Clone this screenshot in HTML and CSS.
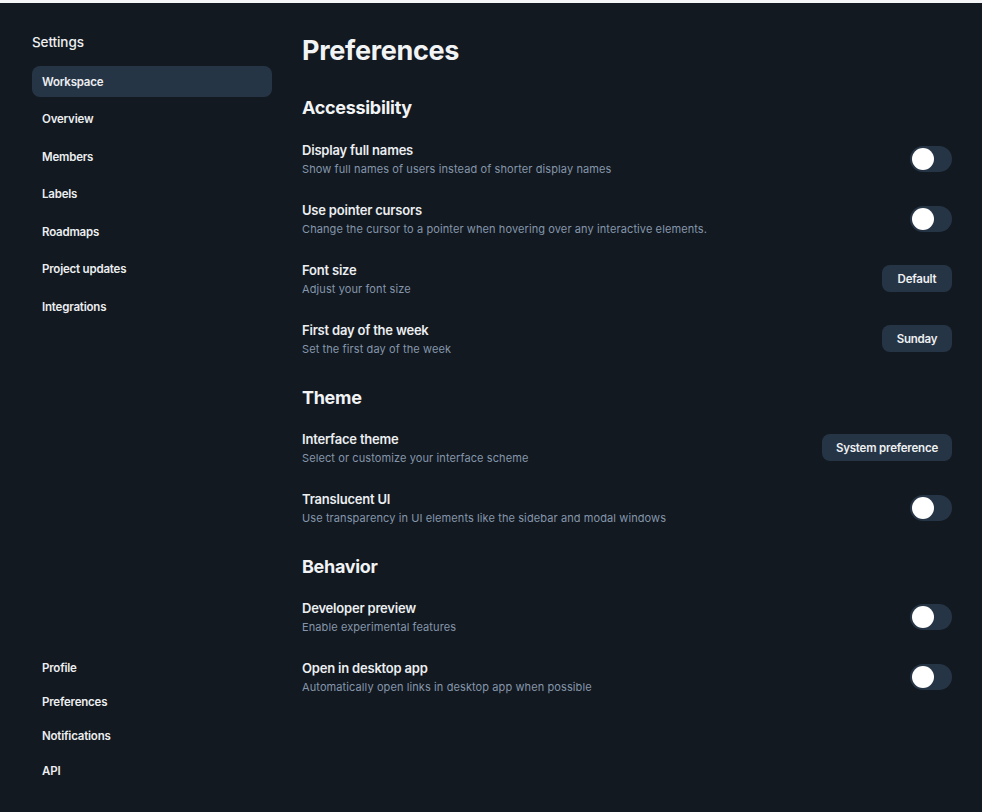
FILE: index.html
```html
<!DOCTYPE html>
<html lang="en">
<head>
<meta charset="utf-8">
<title>Preferences</title>
<link rel="stylesheet" href="styles.css">
</head>
<body>
<div class="app">
  <aside class="sidebar">
    <div class="sidebar-title">Settings</div>
    <nav class="nav">
      <a class="nav-item active">Workspace</a>
      <a class="nav-item">Overview</a>
      <a class="nav-item">Members</a>
      <a class="nav-item">Labels</a>
      <a class="nav-item">Roadmaps</a>
      <a class="nav-item">Project updates</a>
      <a class="nav-item">Integrations</a>
    </nav>
    <nav class="nav nav-bottom">
      <a class="nav-item small">Profile</a>
      <a class="nav-item small">Preferences</a>
      <a class="nav-item small">Notifications</a>
      <a class="nav-item small">API</a>
    </nav>
  </aside>
  <main class="main">
    <h1 class="page-title">Preferences</h1>

    <section class="section">
      <h2 class="section-title">Accessibility</h2>
      <div class="rows">
        <div class="row">
          <div class="row-text">
            <div class="row-title">Display full names</div>
            <div class="row-desc">Show full names of users instead of shorter display names</div>
          </div>
          <span class="toggle"><span class="knob"></span></span>
        </div>
        <div class="row">
          <div class="row-text">
            <div class="row-title">Use pointer cursors</div>
            <div class="row-desc">Change the cursor to a pointer when hovering over any interactive elements.</div>
          </div>
          <span class="toggle"><span class="knob"></span></span>
        </div>
        <div class="row">
          <div class="row-text">
            <div class="row-title">Font size</div>
            <div class="row-desc">Adjust your font size</div>
          </div>
          <button class="select">Default</button>
        </div>
        <div class="row">
          <div class="row-text">
            <div class="row-title">First day of the week</div>
            <div class="row-desc">Set the first day of the week</div>
          </div>
          <button class="select">Sunday</button>
        </div>
      </div>
    </section>

    <section class="section">
      <h2 class="section-title">Theme</h2>
      <div class="rows">
        <div class="row">
          <div class="row-text">
            <div class="row-title">Interface theme</div>
            <div class="row-desc">Select or customize your interface scheme</div>
          </div>
          <button class="select">System preference</button>
        </div>
        <div class="row">
          <div class="row-text">
            <div class="row-title">Translucent UI</div>
            <div class="row-desc">Use transparency in UI elements like the sidebar and modal windows</div>
          </div>
          <span class="toggle"><span class="knob"></span></span>
        </div>
      </div>
    </section>

    <section class="section">
      <h2 class="section-title">Behavior</h2>
      <div class="rows">
        <div class="row">
          <div class="row-text">
            <div class="row-title">Developer preview</div>
            <div class="row-desc">Enable experimental features</div>
          </div>
          <span class="toggle"><span class="knob"></span></span>
        </div>
        <div class="row">
          <div class="row-text">
            <div class="row-title">Open in desktop app</div>
            <div class="row-desc">Automatically open links in desktop app when possible</div>
          </div>
          <span class="toggle"><span class="knob"></span></span>
        </div>
      </div>
    </section>
  </main>
</div>
</body>
</html>
```
FILE: styles.css
```css
* { box-sizing: border-box; }
html, body { margin: 0; padding: 0; height: 100%; }
body {
  background: #f4f5f6;
  padding-top: 3px;
  font-family: Inter, "Noto Sans", sans-serif;
  color: #e9ecef;
}
.app {
  display: flex;
  height: 809px;
  background: #121920;
}
.sidebar {
  width: 272px;
  flex: none;
  display: flex;
  flex-direction: column;
  padding: 30px 0 26px 32px;
}
.sidebar-title {
  font-size: 13.5px;
  line-height: 18px;
  font-weight: 500;
  color: #eef0f2;
  letter-spacing: -0.1px;
  margin-bottom: 15px;
}
.nav {
  display: flex;
  flex-direction: column;
  gap: 6.5px;
}
.nav-bottom {
  margin-top: auto;
  gap: 3.2px;
}
.nav-item {
  display: flex;
  align-items: center;
  height: 31px;
  padding: 0 10px;
  border-radius: 8px;
  font-size: 11.5px;
  font-weight: 600;
  color: #eceef0;
  letter-spacing: -0.2px;
}
.nav-item.active { background: #263546; }
.main {
  flex: 1;
  padding: 32px 30px 0 30px;
}
.page-title {
  margin: 0 0 2px;
  font-size: 27px;
  line-height: 32px;
  font-weight: 700;
  color: #f1f3f5;
  letter-spacing: -0.3px;
}
.section { margin-top: 30px; }
.section:first-of-type { margin-top: 29px; }
.section-title {
  margin: 0 0 20px;
  font-size: 18px;
  line-height: 24px;
  font-weight: 700;
  color: #f1f3f5;
  letter-spacing: -0.3px;
}
.section:first-of-type .section-title { margin-bottom: 21px; }
.rows {
  display: flex;
  flex-direction: column;
  gap: 25px;
}
.row {
  display: flex;
  align-items: center;
  justify-content: space-between;
  min-height: 35px;
}
.row-title {
  font-size: 13px;
  line-height: 18px;
  font-weight: 600;
  color: #eceef1;
  letter-spacing: -0.2px;
}
.row-desc {
  margin-top: 3px;
  font-size: 11px;
  line-height: 14px;
  color: #8596ab;
  letter-spacing: 0.1px;
}
.toggle {
  position: relative;
  width: 42px;
  height: 26px;
  border-radius: 13px;
  background: #263546;
  flex: none;
}
.knob {
  position: absolute;
  left: 2px;
  top: 2px;
  width: 22px;
  height: 22px;
  border-radius: 50%;
  background: #ffffff;
}
.select {
  min-width: 70px;
  height: 27px;
  padding: 0 14px;
  border: 0;
  border-radius: 8px;
  background: #263546;
  font-family: inherit;
  font-size: 11.5px;
  font-weight: 600;
  color: #eef0f2;
  letter-spacing: -0.2px;
}
```
